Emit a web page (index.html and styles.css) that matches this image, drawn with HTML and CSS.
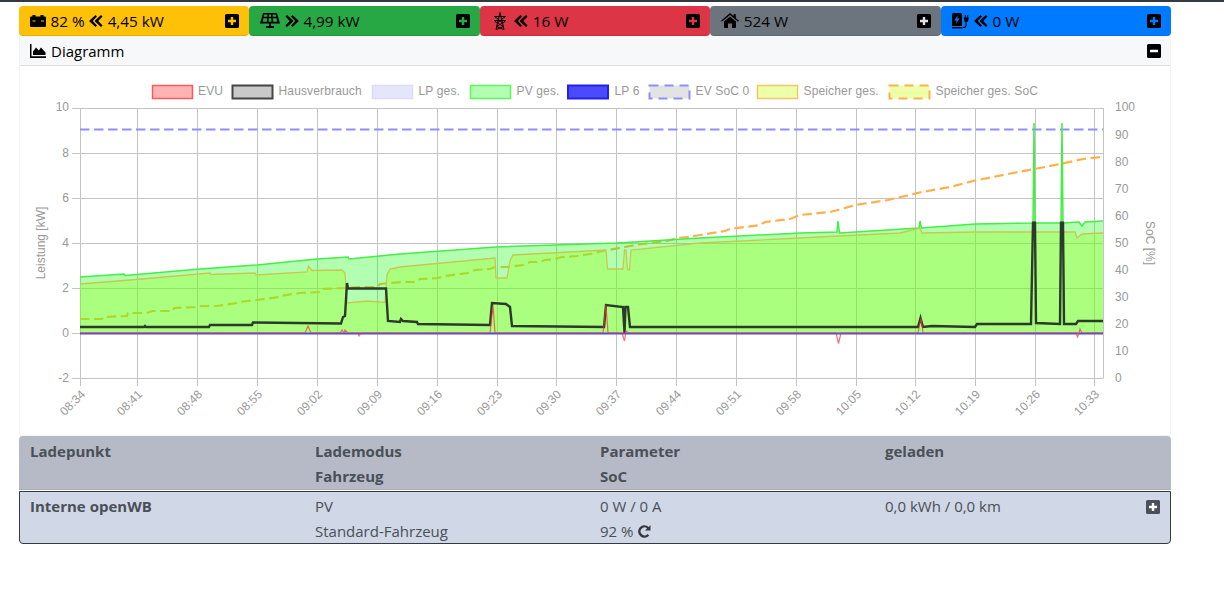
FILE: index.html
```html
<!DOCTYPE html>
<html lang="de">
  <head>
    <meta charset="UTF-8" />
    <meta name="viewport" content="width=device-width, initial-scale=1.0" />
    <title>openWB</title>
    <link rel="stylesheet" href="styles.css">
  </head>
  <body>
    <svg class="defs" width="0" height="0">
      <symbol id="i-plus" viewBox="0 0 14 14"><path fill-rule="evenodd" d="M1.500 0h11A1.500 1.500 0 0 1 14 1.500v11a1.500 1.500 0 0 1-1.500 1.500h-11A1.500 1.500 0 0 1 0 12.500v-11A1.500 1.500 0 0 1 1.500 0zM5.800 3v2.800H3v2.400h2.800V11h2.400V8.200H11V5.800H8.200V3z"/></symbol>
      <symbol id="i-minus" viewBox="0 0 14 14"><path fill-rule="evenodd" d="M1.500 0h11A1.500 1.500 0 0 1 14 1.500v11a1.500 1.500 0 0 1-1.500 1.500h-11A1.500 1.500 0 0 1 0 12.500v-11A1.500 1.500 0 0 1 1.500 0zM3 5.800v2.400h8V5.800z"/></symbol>
      <symbol id="i-left" viewBox="0 0 14 12"><path d="M6.500 0 8 1.500 3.800 6 8 10.500 6.500 12 .8 6.800a1 1 0 0 1 0-1.500zM12 0l1.500 1.500L9.300 6l4.200 4.500L12 12 6.300 6.800a1 1 0 0 1 0-1.500z"/></symbol>
      <symbol id="i-right" viewBox="0 0 14 12"><path d="M7.500 0 6 1.500 10.200 6 6 10.500 7.500 12l5.700-5.200a1 1 0 0 0 0-1.500zM2 0 .5 1.500 4.700 6 .5 10.500 2 12l5.700-5.200a1 1 0 0 0 0-1.500z"/></symbol>
    </svg>

    <div class="topline"></div>

    <div class="page">
      <!-- Kacheln oben -->
      <div class="tiles">
        <div class="tile tile-yellow">
          <svg class="ico" width="16" height="14" viewBox="0 0 16 14"><path fill-rule="evenodd" d="M2.500 1h3v1.500h5V1h3v1.500H15a1 1 0 0 1 1 1V12a1 1 0 0 1-1 1H1a1 1 0 0 1-1-1V3.500a1 1 0 0 1 1-1h1.500zM2.500 6.500v1h3v-1zM11 6.500v1h3v-1z"/></svg>
          <span>82 %</span>
          <svg class="arrow" width="14" height="12"><use href="#i-left"/></svg>
          <span>4,45 kW</span>
          <svg class="plus plus-yellow" width="14" height="14"><use href="#i-plus"/></svg>
        </div>
        <div class="tile tile-green">
          <svg class="ico" width="20" height="16" viewBox="0 0 20 16"><path fill-rule="evenodd" d="M3 0h14l3 10.500H11v2.500h3v2H6v-2h3v-2.500H0zM4.300 1.500l-.5 2.300h3.400l.3-2.300zM9 1.500l-.2 2.300h2.400L11 1.500zM12.500 1.500l.3 2.300h3.400l-.5-2.300zM3.400 5.300 2.800 8.700h4l.3-3.400zM8.700 5.300l-.2 3.400h3l-.2-3.400zM12.900 5.300l.3 3.400h4l-.6-3.400z"/></svg>
          <svg class="arrow" width="14" height="12"><use href="#i-right"/></svg>
          <span>4,99 kW</span>
          <svg class="plus plus-green" width="14" height="14"><use href="#i-plus"/></svg>
        </div>
        <div class="tile tile-red">
          <svg class="ico pylon" width="14" height="18" viewBox="0 0 14 18"><path fill="none" stroke="#000" stroke-width="1" d="M7 .5 3 17.500M7 .5l4 17M1.500 4.500h11M1.500 4.500l3.500 2.500M12.500 4.500 9 7M1 8.500h12M1 8.500l3 2.500M13 8.500 10 11M5 7l4.500 4-6 3.500 7 3M9 7 4.500 11l6 3.500-7 3"/></svg>
          <svg class="arrow" width="14" height="12"><use href="#i-left"/></svg>
          <span>16 W</span>
          <svg class="plus plus-red" width="14" height="14"><use href="#i-plus"/></svg>
        </div>
        <div class="tile tile-grey">
          <svg class="ico" width="18" height="15" viewBox="0 0 18 15"><path d="M9 0 12.500 3V1.200h2.300V5L18 7.800l-.9 1L9 2 .9 8.800 0 7.800zM9 3.500l6 5V14a1 1 0 0 1-1 1h-3v-4.500H7V15H4a1 1 0 0 1-1-1V8.500z"/></svg>
          <span>524 W</span>
          <svg class="plus plus-grey" width="14" height="14"><use href="#i-plus"/></svg>
        </div>
        <div class="tile tile-blue">
          <svg class="ico" width="18" height="16" viewBox="0 0 18 16"><path fill-rule="evenodd" d="M1.500 0h7A1.500 1.500 0 0 1 10 1.500V13H0V1.500A1.500 1.500 0 0 1 1.500 0zM5.800 2 2.500 7.500h2.200L3.800 11 7.500 5.500H5.200zM0 14h10.500v1.500H0zM12.800 2h1v2.500h1.400V2h1v2.500h.8v1h-.6v1.500a2.200 2.200 0 0 1-1.800 2.100v3.400a2.400 2.400 0 0 1-2.500 2.400h-1v-1.200h1a1.200 1.200 0 0 0 1.300-1.200V9.100A2.200 2.200 0 0 1 12.200 7V5.500h-.6v-1h1.200z"/></svg>
          <svg class="arrow" width="14" height="12"><use href="#i-left"/></svg>
          <span>0 W</span>
          <svg class="plus plus-blue" width="14" height="14"><use href="#i-plus"/></svg>
        </div>
      </div>

      <!-- Diagramm -->
      <div class="card">
        <div class="card-head">
          <svg class="ico" width="16" height="14" viewBox="0 0 16 14"><path d="M0 0h1.500v12.300H16V14H0zM3 11V7.500l3-4 2.800 3L11 3.500l4.500 5V11z"/></svg>
          <span>Diagramm</span>
          <svg class="plus plus-dark" width="14" height="14"><use href="#i-minus"/></svg>
        </div>
        <div class="card-body">
          <svg class="chart" width="1150" height="370" viewBox="20 66 1150 370">
            <!-- Raster -->
            <g class="grid">
              <path d="M72 108.500H1103.500M72 153.500H1103.500M72 198.500H1103.500M72 243.500H1103.500M72 288.500H1103.500M72 333.500H1103.500M72 378.500H1103.500"/>
              <path d="M80.500 108V386M137.500 108V386M197.500 108V386M257.500 108V386M317.500 108V386M377.500 108V386M437.500 108V386M497.500 108V386M556.500 108V386M616.500 108V386M676.500 108V386M736.500 108V386M796.500 108V386M856.500 108V386M915.500 108V386M975.500 108V386M1035.500 108V386M1094.500 108V386M1103.500 108V378"/>
            </g>

            <!-- Speicher SoC und EV SoC -->
            <polyline class="line-soc" points="80,319 102,319 103,317 127,316 128,313 147,313 152,311 173,311 174,308 195,307 197,306 217,306 237,303 239,302 257,300 279,297 280,296 300,293 320,292 322,289 345,288 360,287 377,287 380,284 402,282 417,282 420,279 438,278 445,276 468,273 475,270 490,269 495,267 508,267 523,265 530,262 540,262 545,260 555,259 562,257 577,256 590,254 603,251 630,246 643,244 667,241 677,238 687,237 700,235 725,231 730,229 760,225 765,222 790,219 800,215 830,212 845,208 855,205 888,200 905,196 922,192 950,187 973,181 1013,173 1045,167 1060,164 1083,159 1102,157"/>
            <line class="line-ev" x1="80" y1="129.500" x2="1103" y2="129.500"/>

            <!-- PV -->
            <polygon class="fill-pv" points="80,333 80,277 124,274 125,275.500 200,269 257,265 317,259 348,257 349,259 400,254 496,247 617,243 700,238 800,233 837,232 838,221 839.500,233 919,228 920,221 921.500,228 975,224 1033,223 1034,123 1035,223 1061,223 1062,123 1063,223 1079,222 1082,226 1085,222 1103,221 1103,333"/>
            <polyline class="line-pv" points="80,277 124,274 125,275.500 200,269 257,265 317,259 348,257 349,259 400,254 496,247 617,243 700,238 800,233 837,232 838,221 839.500,233 919,228 920,221 921.500,228 975,224 1033,223 1034,123 1035,223 1061,223 1062,123 1063,223 1079,222 1082,226 1085,222 1103,221"/>

            <!-- Speicher -->
            <polygon class="fill-bat" points="80,333 80,284 130,280 210,273 211,274.500 255,273 256,275 307,272 308.500,266 312,270.500 342,270 345,273 347,303 367,301 385,302.500 387,275 390,269 400,267 495,258 496,278 507,278 510,261 513,255 606,250 607.500,269 623,269 624.500,250 626,250 627.500,269 629.500,270 631,250 700,243 800,238 900,233 920,228 922,233 975,232 1033,232 1075,232 1077,238 1082,234 1103,233 1103,333"/>
            <polyline class="line-bat" points="80,284 130,280 210,273 211,274.500 255,273 256,275 307,272 308.500,266 312,270.500 342,270 345,273 347,303 367,301 385,302.500 387,275 390,269 400,267 495,258 496,278 507,278 510,261 513,255 606,250 607.500,269 623,269 624.500,250 626,250 627.500,269 629.500,270 631,250 700,243 800,238 900,233 920,228 922,233 975,232 1033,232 1075,232 1077,238 1082,234 1103,233"/>

            <!-- Hausverbrauch -->
            <polyline class="line-house" points="80,327 144,327 145,326 146,327 209,327 210,325 252,325 253,322.500 341,323.500 343,317 345,316 347,283 348,288.500 386,288.500 388,321 400,322 401,319 403,321 417,322 418,324 490,325 492,303 506,304 510,307 512,326 604,327 606,305 623,307 624.500,333 625.500,307 628,307 630,327 800,327 918,327 920.500,318 923,327 932,326 975,327 977,324 1031,324 1033,222.700 1035,222.700 1036,323 1060,324 1061,222.700 1063,222.700 1064,324 1076,324 1078,321 1103,321"/>

            <!-- EVU und LP -->
            <line class="line-lp" x1="80" y1="333.500" x2="1103" y2="333.500"/>
            <polyline class="line-evu" points="80,333 305,333 308,326 311,333 340,333 342,330 344,333 345,330 348,333 358,333 359,336 361,333 490,333 493,305 495,333 603,333 606,305 608,333 622,333 624.500,341 626,331 629,333 836,333 838.500,343.500 841,333 918,333 921,318 923,333 1076,333 1077.500,337 1079,333 1080,329 1082,333 1103,333"/>

            <!-- Legende -->
            <g class="legend">
              <rect class="lg-evu" x="152.500" y="85.500" width="40" height="13"/>
              <text x="198" y="95">EVU</text>
              <rect class="lg-house" x="232.500" y="85.500" width="40" height="13"/>
              <text x="278.500" y="95">Hausverbrauch</text>
              <rect class="lg-lpges" x="372.500" y="85.500" width="40" height="13"/>
              <text x="418.500" y="95">LP ges.</text>
              <rect class="lg-pv" x="470.500" y="85.500" width="40" height="13"/>
              <text x="516.500" y="95">PV ges.</text>
              <rect class="lg-lp" x="568" y="85.500" width="40" height="13"/>
              <text x="614.500" y="95">LP 6</text>
              <rect class="lg-ev" x="649.500" y="85.500" width="40" height="13"/>
              <text x="695.500" y="95">EV SoC 0</text>
              <rect class="lg-bat" x="757.500" y="85.500" width="40" height="13"/>
              <text x="803.500" y="95">Speicher ges.</text>
              <rect class="lg-soc" x="889.500" y="85.500" width="40" height="13"/>
              <text x="935.500" y="95">Speicher ges. SoC</text>
            </g>

            <!-- Achsen links -->
            <g class="axis axis-left">
              <text x="69" y="111">10</text>
              <text x="69" y="157">8</text>
              <text x="69" y="202">6</text>
              <text x="69" y="247">4</text>
              <text x="69" y="292">2</text>
              <text x="69" y="337">0</text>
              <text x="69" y="382">-2</text>
            </g>
            <text class="axis-title" transform="translate(45 243) rotate(-90)">Leistung [kW]</text>

            <!-- Achsen rechts -->
            <g class="axis">
              <text x="1115" y="111">100</text>
              <text x="1115" y="139">90</text>
              <text x="1115" y="166">80</text>
              <text x="1115" y="193">70</text>
              <text x="1115" y="220">60</text>
              <text x="1115" y="247">50</text>
              <text x="1115" y="274">40</text>
              <text x="1115" y="301">30</text>
              <text x="1115" y="328">20</text>
              <text x="1115" y="355">10</text>
              <text x="1115" y="382">0</text>
            </g>
            <text class="axis-title" transform="translate(1146 243) rotate(90)">SoC [%]</text>

            <!-- Zeitachse -->
            <g class="axis axis-time">
              <text transform="translate(86 395) rotate(-45)">08:34</text>
              <text transform="translate(143 395) rotate(-45)">08:41</text>
              <text transform="translate(203 395) rotate(-45)">08:48</text>
              <text transform="translate(263 395) rotate(-45)">08:55</text>
              <text transform="translate(323 395) rotate(-45)">09:02</text>
              <text transform="translate(383 395) rotate(-45)">09:09</text>
              <text transform="translate(443 395) rotate(-45)">09:16</text>
              <text transform="translate(503 395) rotate(-45)">09:23</text>
              <text transform="translate(562 395) rotate(-45)">09:30</text>
              <text transform="translate(622 395) rotate(-45)">09:37</text>
              <text transform="translate(682 395) rotate(-45)">09:44</text>
              <text transform="translate(742 395) rotate(-45)">09:51</text>
              <text transform="translate(802 395) rotate(-45)">09:58</text>
              <text transform="translate(862 395) rotate(-45)">10:05</text>
              <text transform="translate(921 395) rotate(-45)">10:12</text>
              <text transform="translate(981 395) rotate(-45)">10:19</text>
              <text transform="translate(1041 395) rotate(-45)">10:26</text>
              <text transform="translate(1100 395) rotate(-45)">10:33</text>
            </g>
          </svg>
        </div>
      </div>

      <!-- Ladepunkte -->
      <div class="lp-table">
        <div class="lp-row lp-head">
          <div>Ladepunkt</div>
          <div>Lademodus</div>
          <div>Parameter</div>
          <div>geladen</div>
          <div></div>
          <div>Fahrzeug</div>
          <div>SoC</div>
          <div></div>
        </div>
        <div class="lp-row lp-item">
          <div class="lp-name">Interne openWB</div>
          <div>PV</div>
          <div>0 W / 0 A</div>
          <div class="lp-last">
            <span>0,0 kWh / 0,0 km</span>
            <svg class="plus plus-table" width="14" height="14"><use href="#i-plus"/></svg>
          </div>
          <div></div>
          <div>Standard-Fahrzeug</div>
          <div class="lp-soc">
            <span>92 %</span>
            <svg width="13" height="13" viewBox="0 0 13 13"><path d="M12.500 0v5.500H7l2.100-2.100A3.900 3.900 0 1 0 9.500 9l1.800 1.500A6.300 6.300 0 1 1 10.800 2z"/></svg>
          </div>
          <div></div>
        </div>
      </div>
    </div>
  </body>
</html>
```

FILE: styles.css
```css
* {
  box-sizing: border-box;
  margin: 0;
  padding: 0;
}
body {
  background: #ffffff;
  font-family: "Open Sans", "Liberation Sans", sans-serif;
  color: #000;
}
.defs {
  position: absolute;
}
.topline {
  height: 2px;
  background: #343a40;
}
.page {
  width: 1152px;
  margin: 4px 0 0 19px;
}

/* Kacheln */
.tiles {
  display: grid;
  grid-template-columns: repeat(5, 1fr);
  height: 30px;
}
.tile {
  display: flex;
  align-items: center;
  gap: 4.500px;
  padding: 0 10px 0 11px;
  border-radius: 4px;
  font-size: 15.300px;
  border-bottom: 1px solid rgba(0, 0, 0, 0.1);
}
.tile-yellow {
  background: #ffc107;
}
.tile-green {
  background: #28a745;
}
.tile-red {
  background: #dc3545;
}
.tile-grey {
  background: #6c757d;
}
.tile-blue {
  background: #007bff;
}
.pylon {
  margin: 0 3px 0 2px;
}
.ico {
  flex-shrink: 0;
}
.plus {
  margin-left: auto;
  flex-shrink: 0;
}
.plus-yellow,
.plus-green,
.plus-red,
.plus-grey,
.plus-blue,
.plus-dark {
  fill: #000;
}
.plus-yellow {
  background: linear-gradient(#ffc107, #ffc107) center / 10px 10px no-repeat;
}
.plus-green {
  background: linear-gradient(#28a745, #28a745) center / 10px 10px no-repeat;
}
.plus-red {
  background: linear-gradient(#dc3545, #dc3545) center / 10px 10px no-repeat;
}
.plus-grey {
  background: linear-gradient(#dee2e6, #dee2e6) center / 10px 10px no-repeat;
}
.plus-blue {
  background: linear-gradient(#007bff, #007bff) center / 10px 10px no-repeat;
}
.plus-dark {
  background: linear-gradient(#ffffff, #ffffff) center / 10px 4px no-repeat;
}

/* Diagramm */
.card {
  height: 400px;
  border: 1px solid #f3f3f3;
  border-top: 0;
  border-radius: 0 0 4px 4px;
}
.card-head {
  display: flex;
  align-items: center;
  gap: 5px;
  height: 30px;
  padding: 0 9px 0 10px;
  background: #f7f8fa;
  border-bottom: 1px solid #dfdfdf;
  font-size: 15px;
}
.card-body {
  height: 370px;
}
.chart {
  display: block;
}
.grid path {
  fill: none;
  stroke: #c4c4c4;
  stroke-width: 1;
}
.line-soc {
  fill: none;
  stroke: #ffb04d;
  stroke-width: 2.200;
  stroke-dasharray: 9.500 4.500;
}
.line-ev {
  stroke: #8f8ffc;
  stroke-width: 2.200;
  stroke-dasharray: 9.500 4.500;
}
.fill-pv {
  fill: rgba(0, 255, 0, 0.3);
}
.line-pv {
  fill: none;
  stroke: #44ee44;
  stroke-width: 1.500;
}
.fill-bat {
  fill: rgba(160, 255, 20, 0.32);
}
.line-bat {
  fill: none;
  stroke: #c7c94f;
  stroke-width: 1.300;
}
.line-house {
  fill: none;
  stroke: #2b3a2b;
  stroke-width: 2.400;
}
.line-evu {
  fill: none;
  stroke: rgba(248, 50, 60, 0.7);
  stroke-width: 1.200;
}
.line-lp {
  stroke: #4a4aee;
  stroke-width: 2;
}

/* Legende */
.legend rect {
  stroke-width: 1.500;
}
.lg-evu {
  fill: #ffb3b3;
  stroke: #f65c5c;
}
.lg-house {
  fill: #c9c9c9;
  stroke: #444444;
  stroke-width: 2 !important;
}
.lg-lpges {
  fill: #e6e6fb;
  stroke: #dcdcf5;
}
.lg-pv {
  fill: #b2ffb2;
  stroke: #5cf55c;
}
.lg-lp {
  fill: #4a4aff;
  stroke: #2222e6;
  stroke-width: 2 !important;
}
.lg-ev {
  fill: #e3e3e3;
  stroke: #8f8ffc;
  stroke-width: 2 !important;
  stroke-dasharray: 9 6;
}
.lg-bat {
  fill: #eeffaa;
  stroke: #f5c56e;
}
.lg-soc {
  fill: #eeffaa;
  stroke: #ffb04d;
  stroke-width: 2 !important;
  stroke-dasharray: 9 6;
}
.legend text,
.axis text,
.axis-title {
  font-family: "Liberation Sans", Arial, sans-serif;
  font-size: 12px;
  fill: #999999;
}
.legend text {
  letter-spacing: 0.15px;
}
.axis-left text {
  text-anchor: end;
}
.axis-time text {
  text-anchor: end;
}
.axis-title {
  text-anchor: middle;
}

/* Ladepunkte */
.lp-table {
  font-size: 15px;
  color: #495057;
}
.lp-row {
  display: grid;
  grid-template-columns: repeat(4, 285px);
  padding-left: 11px;
}
.lp-row > div {
  height: 25px;
  line-height: 25px;
}
.lp-head {
  height: 54px;
  padding-top: 3px;
  background: #b5bac6;
  border-radius: 4px 4px 0 0;
  font-weight: 700;
  border-bottom: 1px solid #a8adb8;
}
.lp-item {
  height: 53px;
  margin-top: 1px;
  padding-left: 10px;
  padding-top: 2px;
  background: #d0d7e6;
  border: 1px solid #343a40;
  border-radius: 0 0 4px 4px;
}
.lp-name {
  font-weight: 700;
}
.lp-last {
  display: flex;
  align-items: center;
}
.plus-table {
  fill: #495057;
  margin-right: 10px;
  background: linear-gradient(#ffffff, #ffffff) center / 10px 10px no-repeat;
}
.lp-soc {
  display: flex;
  align-items: center;
  gap: 5px;
}
.lp-soc svg {
  fill: #343a40;
}
```
